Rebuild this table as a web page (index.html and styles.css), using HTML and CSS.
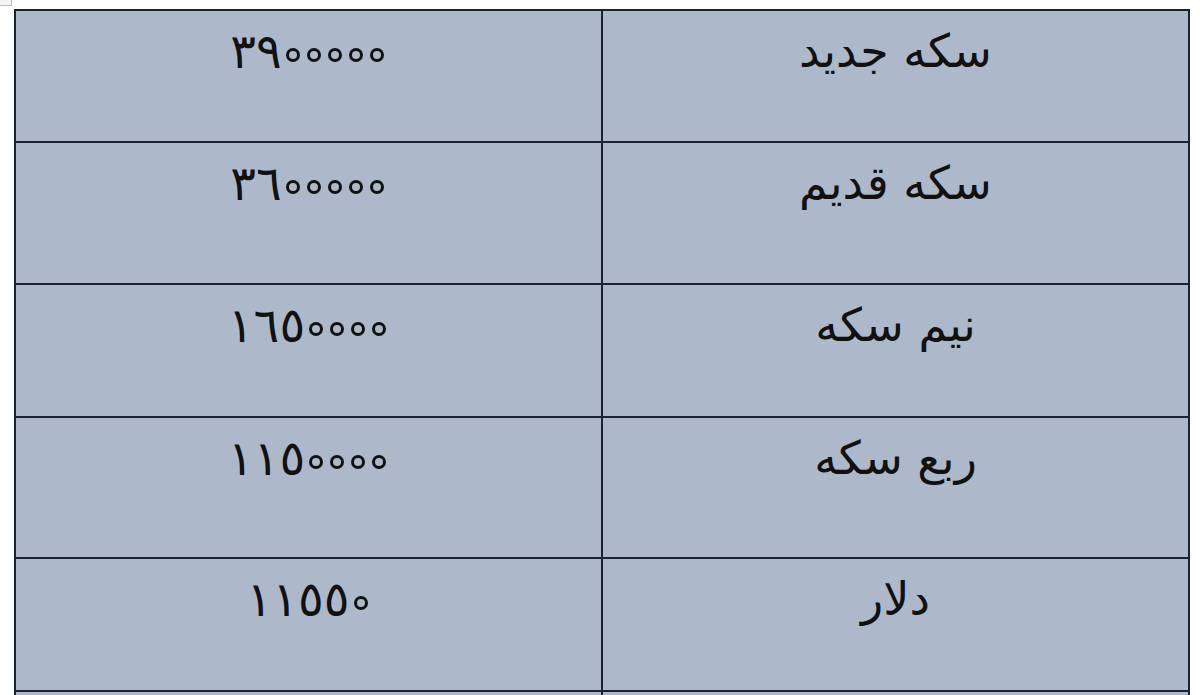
FILE: index.html
```html
<!DOCTYPE html>
<html lang="fa">
<head>
<meta charset="utf-8">
<link rel="stylesheet" href="styles.css">
</head>
<body>
<div class="handle"></div>
<table class="prices" dir="rtl">
  <tr class="r1"><td class="label">سکه جدید</td><td class="value">٣٩<span class="z">٠</span><span class="z">٠</span><span class="z">٠</span><span class="z">٠</span><span class="z">٠</span></td></tr>
  <tr class="r2"><td class="label">سکه قدیم</td><td class="value">٣٦<span class="z">٠</span><span class="z">٠</span><span class="z">٠</span><span class="z">٠</span><span class="z">٠</span></td></tr>
  <tr class="r3"><td class="label">نیم سکه</td><td class="value">١٦٥<span class="z">٠</span><span class="z">٠</span><span class="z">٠</span><span class="z">٠</span></td></tr>
  <tr class="r4"><td class="label">ربع سکه</td><td class="value">١١٥<span class="z">٠</span><span class="z">٠</span><span class="z">٠</span><span class="z">٠</span></td></tr>
  <tr class="r5"><td class="label">دلار</td><td class="value">١١٥٥<span class="z">٠</span></td></tr>
  <tr class="r6"><td class="label"></td><td class="value"></td></tr>
</table>
</body>
</html>
```

FILE: styles.css
```css
html, body {
  margin: 0;
  padding: 0;
  background: #ffffff;
  overflow: hidden;
  height: 695px;
}
body {
  padding: 9px 0 0 14px;
  position: relative;
}
.handle {
  position: absolute;
  left: -2px;
  top: -6px;
  width: 12px;
  height: 10px;
  border: 1px solid #b8bcc4;
  background: #f4f4f4;
}
.prices {
  border-collapse: collapse;
  width: 1176px;
  font-family: "DejaVu Sans", sans-serif;
  color: #111;
  table-layout: fixed;
}
.prices td {
  border: 2px solid #1b2231;
  background: #adb9cb;
  text-align: center;
  vertical-align: top;
  padding: 13px 0 0 0;
  width: 50%;
  line-height: 54px;
}
.label {
  font-size: 46px;
}
.value {
  font-size: 48px;
  direction: ltr;
}
.z {
  display: inline-block;
  box-sizing: border-box;
  width: 14px;
  height: 14px;
  margin: 0 3px 0 4px;
  border: 3px solid #111;
  border-radius: 50%;
  color: transparent;
  font-size: 8px;
  line-height: 8px;
  overflow: hidden;
  vertical-align: 6px;
}
.r1 td { height: 117px; }
.r2 td { height: 127px; }
.r3 td { height: 118px; }
.r4 td { height: 126px; }
.r5 td { height: 118px; }
.r6 td { height: 60px; }
```
